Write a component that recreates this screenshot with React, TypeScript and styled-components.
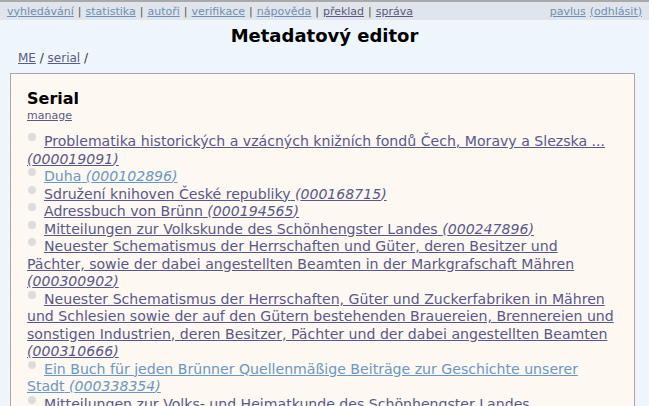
import React from 'react';
import styled, { createGlobalStyle } from 'styled-components';

const GlobalStyle = createGlobalStyle`
  html, body {
    margin: 0;
    padding: 0;
    background: #eef6fc;
    font-family: "DejaVu Sans", sans-serif;
    color: #000;
  }
`;

const TopBar = styled.div`
  display: flex;
  justify-content: space-between;
  align-items: center;
  height: 18px;
  padding: 0 7px;
  background: #dfe5ea;
  border-top: 2px solid #a9a9a9;
  font-size: 11px;
`;

const NavGroup = styled.div`
  display: flex;
  gap: 4px;
  color: #555;
`;

const TopLink = styled.a<{ $visited?: boolean }>`
  color: ${(p) => (p.$visited ? '#5a5a82' : '#6b8fb7')};
  text-decoration: underline;
`;

const Title = styled.h1`
  margin: 5px 0 0;
  text-align: center;
  font-size: 18px;
  font-weight: bold;
  line-height: 22px;
`;

const Crumbs = styled.div`
  margin: 4px 0 0 18px;
  font-size: 12px;
  line-height: 14px;
  color: #333;
`;

const CrumbLink = styled.a`
  color: #5a5a82;
  text-decoration: underline;
`;

const Box = styled.div`
  margin: 8px 14px 0 10px;
  padding: 15px 17px 0 16px;
  background: #fdf8f1;
  border: 1px solid #a7a7a7;
  border-bottom: none;
  min-height: 340px;
`;

const Heading = styled.h2`
  margin: 0;
  font-size: 16px;
  line-height: 20px;
  font-weight: bold;
`;

const Manage = styled.a`
  display: block;
  font-size: 11px;
  line-height: 13px;
  color: #5a5a82;
  text-decoration: underline;
`;

const List = styled.div`
  margin-top: 11px;
  font-size: 14.1px;
  line-height: 17.5px;
`;

const Item = styled.div``;

const Bullet = styled.span`
  display: inline-block;
  width: 8px;
  height: 8px;
  margin: 0 8px 0 1px;
  border-radius: 50%;
  background: #dcdcdc;
  vertical-align: 5px;
`;

const ItemLink = styled.a<{ $visited?: boolean }>`
  color: ${(p) => (p.$visited ? '#58588a' : '#6a97c4')};
  text-decoration: underline;
`;

type Serial = { title: string; id: string; visited: boolean };

const serials: Serial[] = [
  { title: 'Problematika historických a vzácných knižních fondů Čech, Moravy a Slezska ...', id: '000019091', visited: true },
  { title: 'Duha', id: '000102896', visited: false },
  { title: 'Sdružení knihoven České republiky', id: '000168715', visited: true },
  { title: 'Adressbuch von Brünn', id: '000194565', visited: true },
  { title: 'Mitteilungen zur Volkskunde des Schönhengster Landes', id: '000247896', visited: true },
  {
    title:
      'Neuester Schematismus der Herrschaften und Güter, deren Besitzer und Pächter, sowie der dabei angestellten Beamten in der Markgrafschaft Mähren',
    id: '000300902',
    visited: true,
  },
  {
    title:
      'Neuester Schematismus der Herrschaften, Güter und Zuckerfabriken in Mähren und Schlesien sowie der auf den Gütern bestehenden Brauereien, Brennereien und sonstigen Industrien, deren Besitzer, Pächter und der dabei angestellten Beamten',
    id: '000310666',
    visited: true,
  },
  { title: 'Ein Buch für jeden Brünner Quellenmäßige Beiträge zur Geschichte unserer Stadt', id: '000338354', visited: false },
  { title: 'Mitteilungen zur Volks- und Heimatkunde des Schönhengster Landes', id: '000412230', visited: true },
];

const nav = [
  { label: 'vyhledávání', visited: false },
  { label: 'statistika', visited: false },
  { label: 'autoři', visited: false },
  { label: 'verifikace', visited: false },
  { label: 'nápověda', visited: false },
  { label: 'překlad', visited: true },
  { label: 'správa', visited: true },
];

export default function App() {
  return (
    <>
      <GlobalStyle />
      <TopBar>
        <NavGroup>
          {nav.map((n, i) => (
            <React.Fragment key={n.label}>
              {i > 0 && <span>|</span>}
              <TopLink href="#" $visited={n.visited}>
                {n.label}
              </TopLink>
            </React.Fragment>
          ))}
        </NavGroup>
        <NavGroup>
          <TopLink href="#">pavlus</TopLink>
          <TopLink href="#">(odhlásit)</TopLink>
        </NavGroup>
      </TopBar>
      <Title>Metadatový editor</Title>
      <Crumbs>
        <CrumbLink href="#">ME</CrumbLink> / <CrumbLink href="#">serial</CrumbLink> /
      </Crumbs>
      <Box>
        <Heading>Serial</Heading>
        <Manage href="#">manage</Manage>
        <List>
          {serials.map((s) => (
            <Item key={s.id}>
              <Bullet />
              <ItemLink href="#" $visited={s.visited}>
                {s.title} <i>({s.id})</i>
              </ItemLink>
            </Item>
          ))}
        </List>
      </Box>
    </>
  );
}
